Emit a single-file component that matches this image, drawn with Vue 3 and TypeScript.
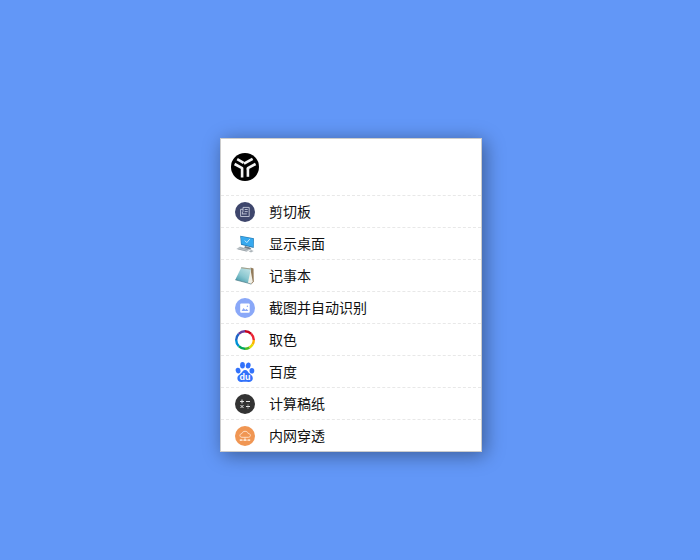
<script setup lang="ts">
import { ref } from 'vue'

type IconName = 'clipboard' | 'desktop' | 'notepad' | 'capture' | 'color' | 'baidu' | 'calculator' | 'tunnel'

interface MenuItem {
  icon: IconName
  label: string
}

const items: MenuItem[] = [
  { icon: 'clipboard', label: '剪切板' },
  { icon: 'desktop', label: '显示桌面' },
  { icon: 'notepad', label: '记事本' },
  { icon: 'capture', label: '截图并自动识别' },
  { icon: 'color', label: '取色' },
  { icon: 'baidu', label: '百度' },
  { icon: 'calculator', label: '计算稿纸' },
  { icon: 'tunnel', label: '内网穿透' },
]

const active = ref<IconName | null>(null)
</script>

<template>
  <main class="desktop">
    <section class="panel">
      <header class="panel-header">
        <svg class="logo" viewBox="0 0 28 28" aria-hidden="true">
          <circle cx="14" cy="14" r="14" fill="#000" />
          <g fill="none" stroke="#f4f4f4" stroke-width="2.6" stroke-linejoin="round">
            <path d="M6.2 6.2 12.6 9.8" />
            <path d="M13 10.6 21.6 5.9" />
            <path d="M3.6 11 11.1 15.2V24.4" />
            <path d="M24.6 11 16.9 15.2V16.6" />
            <path d="M16.9 15.4V23.8" />
          </g>
        </svg>
      </header>
      <ul class="menu">
        <li v-for="item in items" :key="item.icon" class="menu-row">
          <button type="button" class="menu-button" @click="active = item.icon">
            <svg v-if="item.icon === 'clipboard'" class="icon" viewBox="0 0 20 20" aria-hidden="true">
              <circle cx="10" cy="10" r="10" fill="#3e466c" />
              <g fill="none" stroke="#c4c8d9" stroke-width="0.9">
                <path d="M8 7.3H5.6v7.2h8.6V5.4H8v4.4" />
                <path d="M9.7 7.5h3M9.7 9.6h3M7.4 11.9h4.4M7.4 9.8v2.6" />
              </g>
            </svg>
            <svg v-else-if="item.icon === 'desktop'" class="icon" viewBox="0 0 20 20" aria-hidden="true">
              <path d="M10 12 15 13.5l1.5 1.8-4 .7-3.5-1.5z" fill="#747e87" />
              <path d="M5.2 1.8 18.9 4.2 18.7 14 6 10.7z" fill="#2779ae" />
              <path d="M5.9 2.5 18.3 4.8v8.3L6.5 10z" fill="#37a9ef" />
              <path d="m9.8 6.6 2 2 3-3.5" fill="none" stroke="#d8f2ff" stroke-width="0.9" />
              <path d="m1.2 15 3.8-2.4 10 2.8-3.2 2.4z" fill="#c3cace" />
              <path d="m2.8 14.9 8.8 2.1M4.6 13.7l8.6 2.2" stroke="#899299" stroke-width="0.6" />
              <path d="m13.6 17.3 2.7-1.2 2.4.9-2.7 1.4z" fill="#adb5ba" />
            </svg>
            <svg v-else-if="item.icon === 'notepad'" class="icon" viewBox="0 0 20 20" aria-hidden="true">
              <defs>
                <linearGradient id="note-cover" x1="0.8" y1="0" x2="0.2" y2="1">
                  <stop offset="0" stop-color="#c1e3e6" />
                  <stop offset="0.55" stop-color="#8ac7d0" />
                  <stop offset="1" stop-color="#4298a9" />
                </linearGradient>
              </defs>
              <path d="m15.5 1.6 3 .8.3 13.2-2.6 2.8z" fill="#937b5b" />
              <path d="m15.3 2.5 2.4 12.8-1.8 2.7-3.5-1z" fill="#f2f1e8" />
              <path d="M6.4 1.2 16 2.4l-3.1 14.7L.3 13.8z" fill="url(#note-cover)" />
              <path d="M6.4 1.2 16 2.4l-.3 1.2-9.8-1.3z" fill="#a39e88" />
              <path d="m.3 13.8 12.6 3.3 3.2 1" fill="none" stroke="#477984" stroke-width="0.7" />
            </svg>
            <svg v-else-if="item.icon === 'capture'" class="icon" viewBox="0 0 20 20" aria-hidden="true">
              <circle cx="10" cy="10" r="10" fill="#8aa8f8" />
              <rect x="5.2" y="5.6" width="9.5" height="9.2" rx="1" fill="#fff" />
              <path d="m6.5 13 2-3 1.8 1.9 1.2-1.1 2 2.2z" fill="#8aa8f8" />
              <circle cx="12.4" cy="8.2" r="0.7" fill="#8aa8f8" />
            </svg>
            <svg v-else-if="item.icon === 'color'" class="icon" viewBox="0 0 20 20" fill="none" stroke-width="2.4" aria-hidden="true">
              <path d="M10 1.2A8.8 8.8 0 0 1 16.2 3.8" stroke="#c4001d" />
              <path d="M16.2 3.8A8.8 8.8 0 0 1 18.8 10" stroke="#ed2434" />
              <path d="M18.8 10A8.8 8.8 0 0 1 17.6 14.4" stroke="#ffb000" />
              <path d="M17.6 14.4A8.8 8.8 0 0 1 14.4 17.6" stroke="#e4dc00" />
              <path d="M14.4 17.6A8.8 8.8 0 0 1 10 18.8" stroke="#52bd24" />
              <path d="M10 18.8A8.8 8.8 0 0 1 3.8 16.2" stroke="#00a55b" />
              <path d="M3.8 16.2A8.8 8.8 0 0 1 1.2 10" stroke="#0091d4" />
              <path d="M1.2 10A8.8 8.8 0 0 1 3.8 3.8" stroke="#2063c7" />
              <path d="M3.8 3.8A8.8 8.8 0 0 1 10 1.2" stroke="#673b9c" />
            </svg>
            <svg v-else-if="item.icon === 'baidu'" class="icon" viewBox="0 0 20 20" aria-hidden="true">
              <g fill="#3272fb">
                <ellipse cx="3.1" cy="8.6" rx="2.4" ry="2.9" transform="rotate(-12 3.1 8.6)" />
                <ellipse cx="7.5" cy="3.3" rx="2.4" ry="3.2" />
                <ellipse cx="13.2" cy="3.5" rx="2.4" ry="3.1" transform="rotate(12 13.2 3.5)" />
                <ellipse cx="16.9" cy="8.8" rx="2.4" ry="2.8" />
                <path d="M10.1 7.9c-2 0-2.6 1.8-3.8 3.1-1.4 1.5-4 2.6-3.9 5.4.1 2.3 1.8 3.6 4.1 3.5 2.2-.1 4.8-.1 7 0 2.4.1 4.2-1 4.3-3.4.1-2.9-2.4-3.8-3.8-5.4-1.1-1.3-1.8-3.2-3.9-3.2z" />
              </g>
              <text class="paw-text" x="10" y="18" text-anchor="middle">du</text>
            </svg>
            <svg v-else-if="item.icon === 'calculator'" class="icon" viewBox="0 0 20 20" aria-hidden="true">
              <circle cx="10" cy="10" r="10" fill="#333" />
              <path d="M5 7.5h4M7 5.5v4M11 7.5h4M5.5 11l3 3M8.5 11l-3 3M11 12.5h4" stroke="#e5e5e5" stroke-width="1" />
              <path d="M13 10.5v1M13 13.5v1" stroke="#ccc" stroke-width="1" />
            </svg>
            <svg v-else class="icon" viewBox="0 0 20 20" aria-hidden="true">
              <circle cx="10" cy="10" r="10" fill="#f09653" />
              <path d="M7 11.3C4.1 11.2 4.3 7.8 6.8 7.6 7.6 4.6 12.5 4.5 13.2 7.5c2.8 0 3 3.6.2 3.8zM10 11.3v2.9M6 14.1h8" fill="none" stroke="#ffe4ce" stroke-width="0.9" />
              <path d="M4.8 13.2h2v1.7h-2zM9 13.2h2v1.7H9zM13.2 13.2h2v1.7h-2z" fill="#ffe4ce" />
            </svg>
            <span class="label">{{ item.label }}</span>
          </button>
        </li>
      </ul>
    </section>
  </main>
</template>

<style>
body {
  margin: 0;
  background: #6297f7;
}
</style>

<style scoped>
.desktop {
  box-sizing: border-box;
  display: flex;
  align-items: center;
  justify-content: center;
  min-height: 100vh;
  padding: 30px 0 0 2px;
  font-family: "Noto Sans CJK SC", sans-serif;
}

.panel {
  box-sizing: border-box;
  width: 100%;
  max-width: 262px;
  border: 1px solid #ccc;
  background: #fff;
  box-shadow: 3px 3px 18px rgba(0, 0, 0, 0.4);
}

.panel-header {
  display: flex;
  align-items: center;
  height: 56px;
  padding: 0 10px;
}

.logo {
  width: 28px;
  height: 28px;
}

.menu {
  margin: 0;
  padding: 0;
  list-style: none;
}

.menu-row {
  border-top: 1px dashed #e8e8e8;
}

.menu-button {
  display: flex;
  align-items: center;
  gap: 14px;
  width: 100%;
  height: 31px;
  padding: 1px 14px 0;
  border: 0;
  background: transparent;
  color: #111;
  font: inherit;
  font-size: 14px;
  line-height: 20px;
  text-align: left;
  cursor: pointer;
}

.menu-button:hover {
  background: #f4f7fe;
}

.icon {
  flex: none;
  width: 20px;
  height: 20px;
}

.label {
  padding-bottom: 2px;
}

.paw-text {
  fill: #fff;
  font-family: "Liberation Sans", sans-serif;
  font-size: 9px;
  font-weight: 700;
}
</style>
